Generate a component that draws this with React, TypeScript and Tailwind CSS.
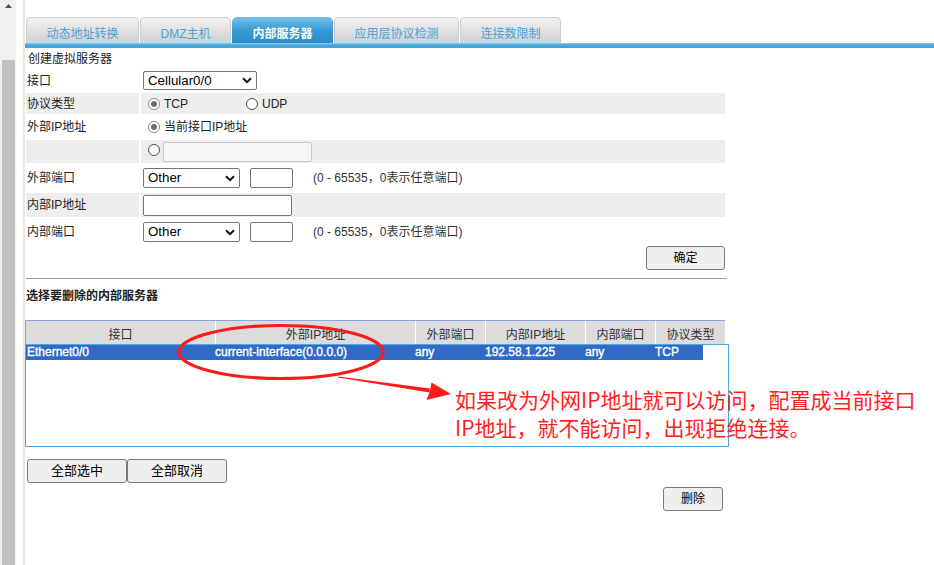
import type { ReactNode } from "react";

const tabs = [
  { label: "动态地址转换", width: "w-[113px]", active: false },
  { label: "DMZ主机", width: "w-[91px]", active: false },
  { label: "内部服务器", width: "w-[101px]", active: true },
  { label: "应用层协议检测", width: "w-[125px]", active: false },
  { label: "连接数限制", width: "w-[101px]", active: false },
];

const columns = [
  { label: "接口", width: "w-[190px] border-r border-white" },
  { label: "外部IP地址", width: "w-[200px] border-r border-white" },
  { label: "外部端口", width: "w-[70px] border-r border-white" },
  { label: "内部IP地址", width: "w-[100px] border-r border-white" },
  { label: "内部端口", width: "w-[70px] border-r border-white" },
  { label: "协议类型", width: "w-[69px]" },
];

const servers = [
  {
    iface: "Ethernet0/0",
    outsideIp: "current-interface(0.0.0.0)",
    outsidePort: "any",
    insideIp: "192.58.1.225",
    insidePort: "any",
    protocol: "TCP",
  },
];

function Chevron() {
  return (
    <svg width="10" height="7" viewBox="0 0 10 7" className="mr-[4px] shrink-0">
      <path d="M1 1.2 L5 5.2 L9 1.2" fill="none" stroke="#111" strokeWidth="2" />
    </svg>
  );
}

function FakeSelect({ value, width, height }: { value: string; width: string; height: string }) {
  return (
    <div
      className={`ml-[2px] flex items-center justify-between rounded-[2px] border border-[#767676] bg-white pl-[4px] text-[13.3px] leading-[16px] text-black ${width} ${height}`}
    >
      <span>{value}</span>
      <Chevron />
    </div>
  );
}

function Radio({ checked }: { checked?: boolean }) {
  if (checked) {
    return (
      <span className="flex h-[12px] w-[12px] shrink-0 items-center justify-center rounded-full border border-[#8d8d8d] bg-white">
        <span className="block h-[6px] w-[6px] rounded-full bg-[#6e6e6e]" />
      </span>
    );
  }
  return <span className="block h-[12px] w-[12px] shrink-0 rounded-full border border-[#4a4a4a] bg-white" />;
}

function Row({
  label,
  gray,
  height,
  children,
}: {
  label: string;
  gray?: boolean;
  height: string;
  children?: ReactNode;
}) {
  const bg = gray ? "bg-[#ededed]" : "bg-white";
  return (
    <div className={`flex gap-[2px] ${height}`}>
      <div className={`flex w-[113px] shrink-0 items-center pl-[1px] ${bg}`}>{label}</div>
      <div className={`flex flex-1 items-center ${bg}`}>{children}</div>
    </div>
  );
}

function PortField() {
  return (
    <>
      <FakeSelect value="Other" width="w-[97px]" height="h-[20px]" />
      <div className="ml-[10px] h-[20px] w-[43px] rounded-[2px] border border-[#767676] bg-white" />
      <span className="ml-[20px] text-[#333]">(0 - 65535，0表示任意端口)</span>
    </>
  );
}

export default function App() {
  return (
    <div className="relative flex h-[565px] w-[934px] overflow-hidden bg-white font-['Liberation_Sans','Noto_Sans_CJK_SC',sans-serif] text-[12px] leading-[16px] text-[#222]">
      {/* scrollbar */}
      <div className="flex w-[16px] shrink-0 flex-col bg-[#f1f1f1]">
        <div className="flex h-[10px] items-end justify-center pb-[2px]">
          <svg width="7" height="4" viewBox="0 0 7 4">
            <path d="M0 4 L3.5 0 L7 4Z" fill="#505050" />
          </svg>
        </div>
        <div className="ml-[2px] mr-[1px] mt-[50px] flex-1 bg-[#c1c1c1]" />
      </div>
      <div className="w-[7px] shrink-0" />
      <div className="w-[2px] shrink-0 bg-[#ecead9]" />

      <main className="flex-1 pt-[17px]">
        {/* tabs */}
        <div className="ml-[1px] flex h-[26px] gap-[1px]">
          {tabs.map((tab) =>
            tab.active ? (
              <div
                key={tab.label}
                className={`flex items-end justify-center rounded-t-[5px] bg-[linear-gradient(#74c0ea,#3399d2_55%,#2a8fca)] pb-[1px] font-bold text-white ${tab.width}`}
              >
                {tab.label}
              </div>
            ) : (
              <div
                key={tab.label}
                className={`flex items-end justify-center rounded-t-[5px] border border-b-0 border-[#cdcdcd] bg-[linear-gradient(#f2f2f2,#d6d6d6_80%,#bcdcee)] pb-[1px] text-[#4aa2dc] ${tab.width}`}
              >
                {tab.label}
              </div>
            ),
          )}
        </div>
        <div className="h-[5px] bg-[linear-gradient(#94cfec,#47a7da_40%,#45a5d9)]" />

        {/* create form */}
        <div className="ml-[1px] mt-[2px] flex w-[699px] flex-col gap-[2px]">
          <div className="h-[18px] pl-[2px] leading-[18px]">创建虚拟服务器</div>
          <Row label="接口" height="h-[21px]">
            <FakeSelect value="Cellular0/0" width="w-[114px]" height="h-[19px]" />
          </Row>
          <Row label="协议类型" gray height="h-[21px]">
            <label className="ml-[7px] flex w-[98px] items-center gap-[4px]">
              <Radio checked />
              <span>TCP</span>
            </label>
            <label className="flex items-center gap-[4px]">
              <Radio />
              <span>UDP</span>
            </label>
          </Row>
          <Row label="外部IP地址" height="h-[22px]">
            <label className="ml-[7px] flex items-center gap-[4px]">
              <Radio checked />
              <span>当前接口IP地址</span>
            </label>
          </Row>
          <Row label="" gray height="h-[23px]">
            <div className="mb-[4px] ml-[7px]">
              <Radio />
            </div>
            <div className="ml-[3px] h-[20px] w-[149px] rounded-[2px] border border-[#c8c8c8] bg-[#f6f6f6]" />
          </Row>
          <Row label="外部端口" height="h-[26px]">
            <PortField />
          </Row>
          <Row label="内部IP地址" gray height="h-[24px]">
            <div className="ml-[2px] h-[21px] w-[149px] rounded-[2px] border border-[#767676] bg-white" />
          </Row>
          <Row label="内部端口" height="h-[26px]">
            <PortField />
          </Row>
        </div>

        <div className="mt-[1px] flex w-[700px] justify-end">
          <button className="h-[24px] w-[79px] rounded-[3px] border border-[#7a7a7a] bg-[#efefef] text-[12px] text-black">
            确定
          </button>
        </div>

        <div className="ml-[1px] mt-[8px] h-px w-[701px] bg-[#a3a3a3]" />

        {/* delete list */}
        <div className="ml-[1px] mt-[8px] h-[18px] font-bold leading-[18px]">选择要删除的内部服务器</div>

        <div className="mt-[15px] flex h-[24px] w-[700px] border-l border-t border-[#8ea4dc] bg-[#dcdcdc] text-[#333]">
          {columns.map((col) => (
            <div key={col.label} className={`pt-[5px] text-center leading-[18px] ${col.width}`}>
              {col.label}
            </div>
          ))}
        </div>

        <div className="h-[103px] w-[704px] border border-[#4ba8df]">
          {servers.map((s) => (
            <div
              key={s.iface}
              className="flex h-[15px] w-[677px] bg-[#316ac5] leading-[15px] text-white [-webkit-text-stroke:0.35px]"
            >
              <div className="w-[189px] pl-[1px]">{s.iface}</div>
              <div className="w-[200px]">{s.outsideIp}</div>
              <div className="w-[70px]">{s.outsidePort}</div>
              <div className="w-[100px]">{s.insideIp}</div>
              <div className="w-[70px]">{s.insidePort}</div>
              <div className="w-[48px]">{s.protocol}</div>
            </div>
          ))}
        </div>

        <div className="mt-[12px] flex pl-[2px]">
          <button className="h-[24px] w-[100px] rounded-[3px] border border-[#7a7a7a] bg-[#efefef] text-[13px] text-black">
            全部选中
          </button>
          <button className="h-[24px] w-[100px] rounded-[3px] border border-[#7a7a7a] bg-[#efefef] text-[13px] text-black">
            全部取消
          </button>
        </div>

        <div className="mt-[4px] flex w-[698px] justify-end">
          <button className="h-[24px] w-[60px] rounded-[3px] border border-[#7a7a7a] bg-[#efefef] text-[12px] text-black">
            删除
          </button>
        </div>
      </main>

      {/* red annotation drawn over the screenshot */}
      <svg
        className="pointer-events-none absolute left-0 top-0"
        width="934"
        height="565"
        viewBox="0 0 934 565"
      >
        <ellipse cx="281" cy="352" rx="102" ry="26.5" fill="none" stroke="#ff1a1a" strokeWidth="3" />
        <polygon points="338,376.4 430,388.6 429.4,392.6 338,377.6" fill="#ff1a1a" />
        <polygon points="451,394 426.5,400 430,391 431.5,382.5" fill="#ff1a1a" />
      </svg>
      <div className="pointer-events-none absolute left-[455px] top-[385px] whitespace-nowrap font-['Noto_Sans_CJK_SC','Liberation_Sans',sans-serif] text-[21px] leading-[28px] text-[#ff1e1e]">
        <div>如果改为外网IP地址就可以访问，配置成当前接口</div>
        <div>IP地址，就不能访问，出现拒绝连接。</div>
      </div>
    </div>
  );
}
